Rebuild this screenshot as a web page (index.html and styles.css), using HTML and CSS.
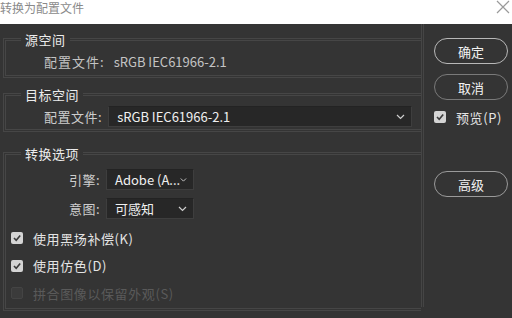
FILE: index.html
```html
<!DOCTYPE html>
<html lang="zh-CN">
<head>
<meta charset="utf-8">
<title>转换为配置文件</title>
<link rel="stylesheet" href="styles.css">
</head>
<body>
<div class="titlebar">
  <span class="title">转换为配置文件</span>
  <svg class="close" width="14" height="14" viewBox="0 0 14 14"><path d="M1 1L13 13M13 1L1 13" stroke="#9a9a9a" stroke-width="1.2" fill="none"/></svg>
</div>
<div class="main">
  <div class="left">
    <fieldset class="group g1">
      <legend>源空间</legend>
      <div class="field">
        <span class="label">配置文件:</span>
        <span class="value">sRGB IEC61966-2.1</span>
      </div>
    </fieldset>
    <fieldset class="group g2">
      <legend>目标空间</legend>
      <div class="field">
        <span class="label">配置文件:</span>
        <div class="select wide"><span>sRGB IEC61966-2.1</span><svg class="arrow" width="9" height="6" viewBox="0 0 9 6"><path d="M1 1L4.5 4.5L8 1" stroke="#cfcfcf" stroke-width="1.2" fill="none"/></svg></div>
      </div>
    </fieldset>
    <fieldset class="group g3">
      <legend>转换选项</legend>
      <div class="field">
        <span class="label">引擎:</span>
        <div class="select narrow"><span>Adobe (A...</span><svg class="arrow" width="9" height="6" viewBox="0 0 9 6"><path d="M1 1L4.5 4.5L8 1" stroke="#cfcfcf" stroke-width="1.2" fill="none"/></svg></div>
      </div>
      <div class="field f2">
        <span class="label">意图:</span>
        <div class="select narrow"><span>可感知</span><svg class="arrow" width="9" height="6" viewBox="0 0 9 6"><path d="M1 1L4.5 4.5L8 1" stroke="#cfcfcf" stroke-width="1.2" fill="none"/></svg></div>
      </div>
      <div class="checks">
        <label class="check"><span class="box on"><svg width="10" height="10" viewBox="0 0 10 10"><path d="M2 5L4.2 7.3L8.2 2.5" stroke="#3a3a3a" stroke-width="1.6" fill="none"/></svg></span>使用黑场补偿(K)</label>
        <label class="check"><span class="box on"><svg width="10" height="10" viewBox="0 0 10 10"><path d="M2 5L4.2 7.3L8.2 2.5" stroke="#3a3a3a" stroke-width="1.6" fill="none"/></svg></span>使用仿色(D)</label>
        <label class="check disabled"><span class="box off"></span>拼合图像以保留外观(S)</label>
      </div>
    </fieldset>
  </div>
  <div class="right">
    <button class="btn primary">确定</button>
    <button class="btn secondary">取消</button>
    <label class="check preview"><span class="box on"><svg width="10" height="10" viewBox="0 0 10 10"><path d="M2 5L4.2 7.3L8.2 2.5" stroke="#3a3a3a" stroke-width="1.6" fill="none"/></svg></span>预览(P)</label>
    <button class="btn adv">高级</button>
  </div>
</div>
</body>
</html>
```

FILE: styles.css
```css
* { box-sizing: border-box; }
html, body {
  margin: 0;
  padding: 0;
  width: 512px;
  height: 318px;
  overflow: hidden;
  background: #343434;
  font-family: "Noto Sans CJK SC", "Noto Sans", sans-serif;
  font-size: 13px;
  color: #d6d6d6;
}
.titlebar {
  height: 24px;
  background: #ffffff;
  display: flex;
  align-items: flex-start;
  justify-content: space-between;
}
.title {
  font-size: 12px;
  line-height: 16px;
  color: #8a8a8a;
}
.close {
  margin-right: 2px;
}
.main {
  display: flex;
  height: 294px;
}
.left {
  width: 424px;
  padding: 8px 0 0 3px;
  border-right: 3px double #454545;
  height: 283px;
}
.group {
  margin: 0;
  padding: 0;
  border: 3px double #464646;
  border-right: none;
  min-width: 0;
}
.group legend {
  padding: 0 4px;
  margin-left: 15px;
  line-height: 15px;
  color: #ececec;
  letter-spacing: 0.5px;
}
.g1 { padding-top: 6px; padding-bottom: 6px; }
.g2 { margin-top: 9px; padding-top: 4px; padding-bottom: 2px; }
.g3 { margin-top: 14px; padding-top: 8px; padding-bottom: 6px; }
.field {
  display: flex;
  align-items: center;
  gap: 6px;
  height: 21px;
}
.g1 .field, .g2 .field { padding-left: 38px; }
.g1 .field { height: 16px; }
.g1 .label { color: #c4c4c4; letter-spacing: 1px; }
.g2 .label { letter-spacing: 0.5px; }
.g1 .value { margin-left: 3px; color: #c4c4c4; }
.g3 .label { width: 94px; text-align: right; letter-spacing: 0.5px; }
.label {
  color: #cdcdcd;
  white-space: nowrap;
}
.f2 { margin-top: 8px; }
.select {
  height: 21px;
  background: #272727;
  border: 1px solid #3e3e3e;
  border-top-color: #232323;
  display: flex;
  align-items: center;
  justify-content: space-between;
  padding: 0 6px 0 8px;
  color: #f0f0f0;
  white-space: nowrap;
}
.select.wide { width: 304px; }
.select.narrow { width: 88px; }
.arrow { margin-top: 1px; }
.checks {
  display: flex;
  flex-direction: column;
  padding-left: 5px;
  margin-top: 10px;
  gap: 9.5px;
}
.check {
  display: flex;
  align-items: center;
  height: 18px;
  color: #e4e4e4;
  white-space: nowrap;
  letter-spacing: 0.6px;
}
.check .box {
  width: 12px;
  height: 12px;
  margin-right: 10px;
  display: flex;
  align-items: center;
  justify-content: center;
  border-radius: 2px;
}
.box.on { background: #d4d4d4; }
.box.off { background: #3b3b3b; border: 1px solid #444; }
.check.disabled { color: #5a5a5a; }
.right {
  flex: 1;
  display: flex;
  flex-direction: column;
  align-items: flex-start;
  padding: 14px 0 0 10px;
}
.btn {
  width: 74px;
  height: 26px;
  border-radius: 13px;
  background: #343434;
  color: #f2f2f2;
  font-family: inherit;
  font-size: 13px;
  padding: 0;
  border: 1px solid #b8b8b8;
}
.btn.secondary { margin-top: 10px; border-color: #7a7a7a; }
.preview { margin-top: 8px; }
.btn.adv { margin-top: 45px; border-color: #9a9a9a; }
```
